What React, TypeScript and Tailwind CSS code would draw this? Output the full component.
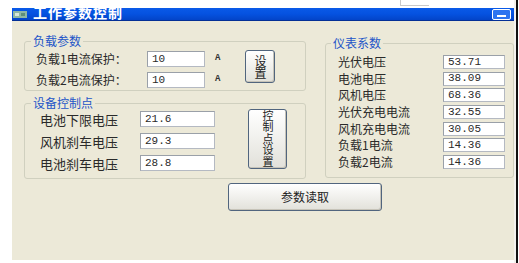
import React from 'react';

const cjk = { fontFamily: '"Noto Sans CJK SC", "Noto Sans", sans-serif' };
const mono = { fontFamily: '"Liberation Mono", "DejaVu Sans Mono", monospace' };

const meters = [
  { label: '光伏电压', value: '53.71' },
  { label: '电池电压', value: '38.09' },
  { label: '风机电压', value: '68.36' },
  { label: '光伏充电电流', value: '32.55' },
  { label: '风机充电电流', value: '30.05' },
  { label: '负载1电流', value: '14.36' },
  { label: '负载2电流', value: '14.36' },
];

const points = [
  { label: '电池下限电压', value: '21.6' },
  { label: '风机刹车电压', value: '29.3' },
  { label: '电池刹车电压', value: '28.8' },
];

const Field: React.FC<{ value: string; className: string }> = ({ value, className }) => (
  <div
    className={`bg-white border border-[#b4b9c2] border-t-[#9aa0a8] border-l-[#9aa0a8] flex items-center pl-[4px] text-[11px] text-[#2a2a2a] ${className}`}
    style={mono}
  >
    {value}
  </div>
);

const XpButton: React.FC<{ className: string; children: React.ReactNode }> = ({ className, children }) => (
  <button
    className={`border border-[#51657e] rounded-[3px] bg-gradient-to-b from-white to-[#e2e1da] shadow-[inset_-1px_-1px_0_#c6c3b8] text-[#222] flex flex-col items-center justify-center ${className}`}
    style={cjk}
  >
    {children}
  </button>
);

export default function App() {
  return (
    <div className="relative w-[519px] h-[263px] bg-white flex overflow-hidden" style={cjk}>
      {/* bit of another window peeking at the top */}
      <div className="absolute left-[400px] top-0 w-[29px] h-[6px] border-l border-b border-[#c9c9c9]" />

      <div className="w-[12px] shrink-0" />

      <div className="w-[502px] shrink-0 flex flex-col pt-[8px]">
        {/* title bar */}
        <div className="h-[13px] bg-gradient-to-b from-[#0a5ae8] via-[#0552e0] to-[#0344c8] border-b border-[#032f96] flex items-center overflow-hidden">
          <svg width="16" height="11" viewBox="0 0 16 11" className="shrink-0">
            <rect x="1" y="2" width="14" height="7" fill="#8fb7a4" />
            <rect x="3" y="4" width="4" height="3" fill="#d8e8dd" />
            <rect x="9" y="4" width="4" height="3" fill="#5f8f7a" />
          </svg>
          <span className="ml-[5px] -mt-[4px] text-[14px] leading-[14px] font-bold text-white tracking-[1px]">
            工作参数控制
          </span>
          <div className="ml-auto mr-[3px] w-[19px] h-[11px] rounded-[2px] border border-white bg-[#2d74f0] flex items-end justify-center pb-[2px]">
            <div className="w-[9px] h-[2px] bg-white" />
          </div>
        </div>

        {/* window body */}
        <div className="h-[239px] bg-[#ece9d8] flex flex-col">
          <div className="flex pl-[12px]">
            {/* left column */}
            <div className="w-[282px] flex flex-col pt-[14px]">
              <fieldset className="h-[56px] border border-[#d0d0bf] rounded-[3px]">
                <legend className="ml-[6px] px-[2px] text-[12px] leading-[12px] text-[#2355c8]">负载参数</legend>
                <div className="flex items-start pt-[3px] pl-[11px]">
                  <div className="flex flex-col gap-[5px] mt-[1px]">
                    {['负载1电流保护：', '负载2电流保护：'].map(l => (
                      <div key={l} className="flex items-center h-[16px]">
                        <span className="w-[111px] text-[12px] leading-[12px] text-[#2a2a2a]">{l}</span>
                        <Field value="10" className="w-[58px] h-[16px]" />
                        <span className="ml-[10px] w-[8px] text-[9px] font-bold text-[#333]" style={mono}>A</span>
                      </div>
                    ))}
                  </div>
                  <XpButton className="ml-[22px] w-[30px] h-[33px]">
                    <span className="[writing-mode:vertical-rl] text-[12px] leading-[12px] tracking-[0px]">设置</span>
                  </XpButton>
                </div>
              </fieldset>

              <fieldset className="mt-[6px] h-[82px] border border-[#d0d0bf] rounded-[3px]">
                <legend className="ml-[6px] px-[2px] text-[12px] leading-[12px] text-[#2355c8]">设备控制点</legend>
                <div className="flex items-start pl-[15px]">
                  <div className="flex flex-col gap-[6px] pt-[2px]">
                    {points.map(p => (
                      <div key={p.label} className="flex items-center h-[16px]">
                        <span className="w-[100px] text-[13px] leading-[13px] text-[#2a2a2a]">{p.label}</span>
                        <Field value={p.value} className="w-[75px] h-[16px]" />
                      </div>
                    ))}
                  </div>
                  <XpButton className="ml-[33px] w-[39px] h-[60px]">
                    <span className="[writing-mode:vertical-rl] text-[11px] leading-[11px] tracking-[0.5px]">控制点设置</span>
                  </XpButton>
                </div>
              </fieldset>
            </div>

            {/* right column */}
            <fieldset className="ml-[19px] mt-[16px] w-[189px] h-[141px] border border-[#d0d0bf] rounded-[3px]">
              <legend className="ml-[5px] px-[2px] text-[12px] leading-[12px] text-[#2355c8]">仪表系数</legend>
              <div className="flex flex-col gap-[2.7px] pt-[6px] pl-[12px]">
                {meters.map((m, i) => (
                  <div key={i} className="flex items-center h-[14px]">
                    <span className="w-[105px] text-[12px] leading-[12px] text-[#2a2a2a]">{m.label}</span>
                    <Field value={m.value} className="w-[62px] h-[14px]" />
                  </div>
                ))}
              </div>
            </fieldset>
          </div>

          <div className="pl-[216px] pt-[4px]">
            <XpButton className="w-[154px] h-[28px] text-[12px] leading-[12px] border-[#4d5f77]">
              参数读取
            </XpButton>
          </div>
        </div>
      </div>

      <div className="w-[2px] shrink-0 bg-[#f3f2ee]" />
      <div className="w-[2px] shrink-0 bg-[#111]" />
    </div>
  );
}
